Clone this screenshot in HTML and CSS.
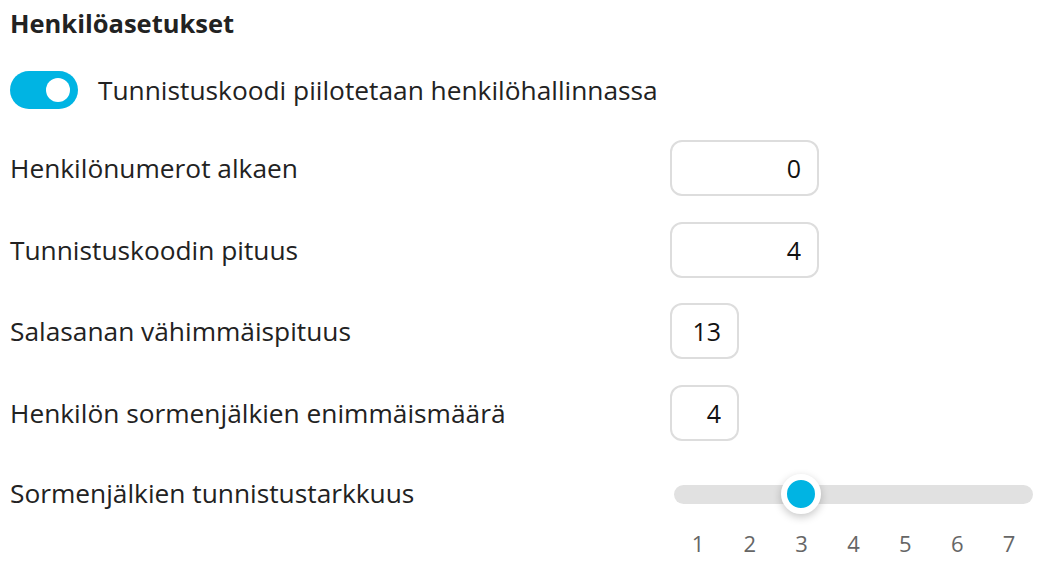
FILE: index.html
```html
<!DOCTYPE html>
<html lang="fi">
<head>
<meta charset="utf-8">
<title>Henkilöasetukset</title>
<link rel="stylesheet" href="styles.css">
</head>
<body>
<main class="panel">
  <h2 class="title">Henkilöasetukset</h2>
  <div class="toggle-row">
    <span class="switch"><span class="knob"></span></span>
    <span class="toggle-label">Tunnistuskoodi piilotetaan henkilöhallinnassa</span>
  </div>
  <div class="settings">
    <div class="row">
      <span class="label">Henkilönumerot alkaen</span>
      <input class="field field-wide" type="text" value="0">
    </div>
    <div class="row">
      <span class="label">Tunnistuskoodin pituus</span>
      <input class="field field-wide" type="text" value="4">
    </div>
    <div class="row">
      <span class="label">Salasanan vähimmäispituus</span>
      <input class="field field-narrow" type="text" value="13">
    </div>
    <div class="row">
      <span class="label">Henkilön sormenjälkien enimmäismäärä</span>
      <input class="field field-narrow" type="text" value="4">
    </div>
    <div class="row row-slider">
      <span class="label">Sormenjälkien tunnistustarkkuus</span>
      <div class="slider">
        <div class="track">
          <span class="thumb" style="left: 107px"></span>
        </div>
        <div class="ticks">
          <span>1</span><span>2</span><span>3</span><span>4</span><span>5</span><span>6</span><span>7</span>
        </div>
      </div>
    </div>
  </div>
</main>
</body>
</html>
```
FILE: styles.css
```css
* { box-sizing: border-box; }
html, body {
  margin: 0;
  padding: 0;
  background: #ffffff;
}
body {
  font-family: "Open Sans", "Noto Sans", "Liberation Sans", sans-serif;
  color: #1f1f1f;
}
.panel {
  padding: 0 10px;
  width: 1041px;
}
.title {
  margin: 7px 0 0;
  font-size: 25.5px;
  line-height: 32px;
  font-weight: 700;
  color: #222;
}
.toggle-row {
  display: flex;
  align-items: center;
  gap: 20px;
  margin-top: 32px;
  height: 38px;
}
.switch {
  width: 68px;
  height: 38px;
  border-radius: 19px;
  background: #00b4e3;
  display: flex;
  align-items: center;
  justify-content: flex-end;
  padding-right: 8px;
  flex: none;
}
.knob {
  width: 24px;
  height: 24px;
  border-radius: 50%;
  background: #fff;
}
.toggle-label {
  font-size: 26.3px;
  color: #222;
}
.settings {
  display: flex;
  flex-direction: column;
  gap: 25.5px;
  margin-top: 31px;
}
.row {
  display: grid;
  grid-template-columns: 660px auto;
  align-items: center;
  height: 56px;
}
.label {
  font-size: 26.3px;
  color: #222;
}
.field {
  height: 56px;
  border: 2px solid #dddddd;
  border-radius: 12px;
  background: #fff;
  font-family: inherit;
  font-size: 25px;
  color: #111;
  text-align: right;
  padding: 0 16px 0 8px;
  outline: none;
}
.field-wide { width: 149px; }
.field-narrow { width: 69px; }
.row-slider {
  align-items: start;
  height: auto;
  margin-top: 9px;
}
.row-slider .label {
  line-height: 36px;
}
.slider {
  margin-left: 4px;
  width: 359px;
  padding-top: 10px;
}
.track {
  position: relative;
  height: 19px;
  border-radius: 10px;
  background: #e1e1e1;
}
.thumb {
  position: absolute;
  top: -11px;
  width: 40px;
  height: 40px;
  border-radius: 50%;
  background: #00b4e3;
  border: 6px solid #fff;
  box-shadow: 0 3px 8px rgba(0, 0, 0, 0.22);
}
.ticks {
  display: grid;
  grid-template-columns: repeat(7, 1fr);
  margin: 24px -2px 0;
  font-size: 22px;
  color: #666;
  text-align: center;
}
```
